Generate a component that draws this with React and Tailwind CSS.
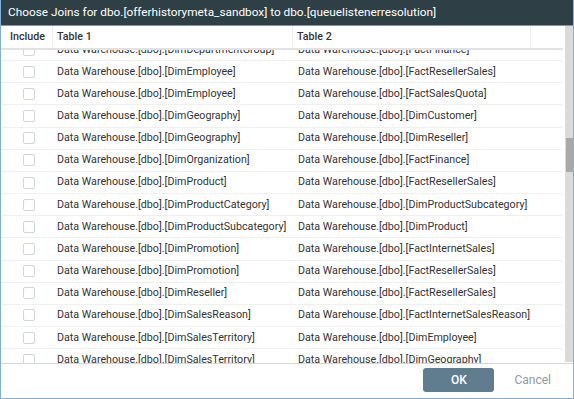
const ROWS = [
    ['Data Warehouse.[dbo].[DimDepartmentGroup]', 'Data Warehouse.[dbo].[FactFinance]'],
    ['Data Warehouse.[dbo].[DimEmployee]', 'Data Warehouse.[dbo].[FactResellerSales]'],
    ['Data Warehouse.[dbo].[DimEmployee]', 'Data Warehouse.[dbo].[FactSalesQuota]'],
    ['Data Warehouse.[dbo].[DimGeography]', 'Data Warehouse.[dbo].[DimCustomer]'],
    ['Data Warehouse.[dbo].[DimGeography]', 'Data Warehouse.[dbo].[DimReseller]'],
    ['Data Warehouse.[dbo].[DimOrganization]', 'Data Warehouse.[dbo].[FactFinance]'],
    ['Data Warehouse.[dbo].[DimProduct]', 'Data Warehouse.[dbo].[FactResellerSales]'],
    ['Data Warehouse.[dbo].[DimProductCategory]', 'Data Warehouse.[dbo].[DimProductSubcategory]'],
    ['Data Warehouse.[dbo].[DimProductSubcategory]', 'Data Warehouse.[dbo].[DimProduct]'],
    ['Data Warehouse.[dbo].[DimPromotion]', 'Data Warehouse.[dbo].[FactInternetSales]'],
    ['Data Warehouse.[dbo].[DimPromotion]', 'Data Warehouse.[dbo].[FactResellerSales]'],
    ['Data Warehouse.[dbo].[DimReseller]', 'Data Warehouse.[dbo].[FactResellerSales]'],
    ['Data Warehouse.[dbo].[DimSalesReason]', 'Data Warehouse.[dbo].[FactInternetSalesReason]'],
    ['Data Warehouse.[dbo].[DimSalesTerritory]', 'Data Warehouse.[dbo].[DimEmployee]'],
    ['Data Warehouse.[dbo].[DimSalesTerritory]', 'Data Warehouse.[dbo].[DimGeography]'],
    ['Data Warehouse.[dbo].[DimSalesTerritory]', 'Data Warehouse.[dbo].[DimReseller]'],
];

export default function App() {
    return (
        <div className="w-[574px] h-[399px] flex flex-col bg-white border-x border-b border-[#7eb0df] font-['Roboto',sans-serif] text-[10.7px] text-[#333]">
            {/* Title bar */}
            <div className="h-[26px] shrink-0 flex items-center pl-[7px] bg-[#2e3f46] border-b border-[#8a9499] text-white text-[11.8px]">
                Choose Joins for dbo.[offerhistorymeta_sandbox] to dbo.[queuelistenerresolution]
            </div>

            {/* Grid */}
            <div className="h-[338px] shrink-0 flex border-b border-[#d6d6d6]">
                <div className="flex-1 flex flex-col min-w-0">
                    <div className="h-[24px] shrink-0 flex border-b-2 border-[#e2e2e2] font-medium text-[#333]">
                        <div className="w-[52px] flex items-center pl-[9px] border-r border-[#eeeeee]">Include</div>
                        <div className="w-[240px] flex items-center pl-[4px] border-r border-[#eeeeee]">Table 1</div>
                        <div className="w-[238px] flex items-center pl-[4px] border-r border-[#eeeeee]">Table 2</div>
                        <div className="flex-1" />
                    </div>
                    <div className="flex-1 overflow-hidden">
                        <div className="-mt-[11px]">
                            {ROWS.map((r, i) => (
                                <div key={i} className="h-[22.17px] flex items-center border-b border-[#f0f0f0]">
                                    <div className="w-[52px] pl-[22px] flex items-center">
                                        <span className="w-[12px] h-[12px] rounded-[2px] border border-[#cfd6dd] bg-white" />
                                    </div>
                                    <div className="w-[240px] pl-[4px] whitespace-nowrap overflow-hidden">{r[0]}</div>
                                    <div className="w-[238px] pl-[5px] whitespace-nowrap overflow-hidden">{r[1]}</div>
                                </div>
                            ))}
                        </div>
                    </div>
                </div>
                {/* Scrollbar */}
                <div className="w-[8px] ml-[2px] mb-[1px] relative bg-[#dadada]">
                    <div className="absolute left-[1px] right-0 top-[112px] h-[34px] bg-[#a9a9a9]" />
                </div>
            </div>

            {/* Footer */}
            <div className="flex-1 flex items-start justify-end pt-[4px] pr-[22px] gap-[20px]">
                <button className="w-[71px] h-[24px] rounded-[3px] bg-[#5f7d8e] text-white text-[12px] font-medium">OK</button>
                <span className="leading-[24px] text-[12px] text-[#8d9aa3]">Cancel</span>
            </div>
        </div>
    );
}
